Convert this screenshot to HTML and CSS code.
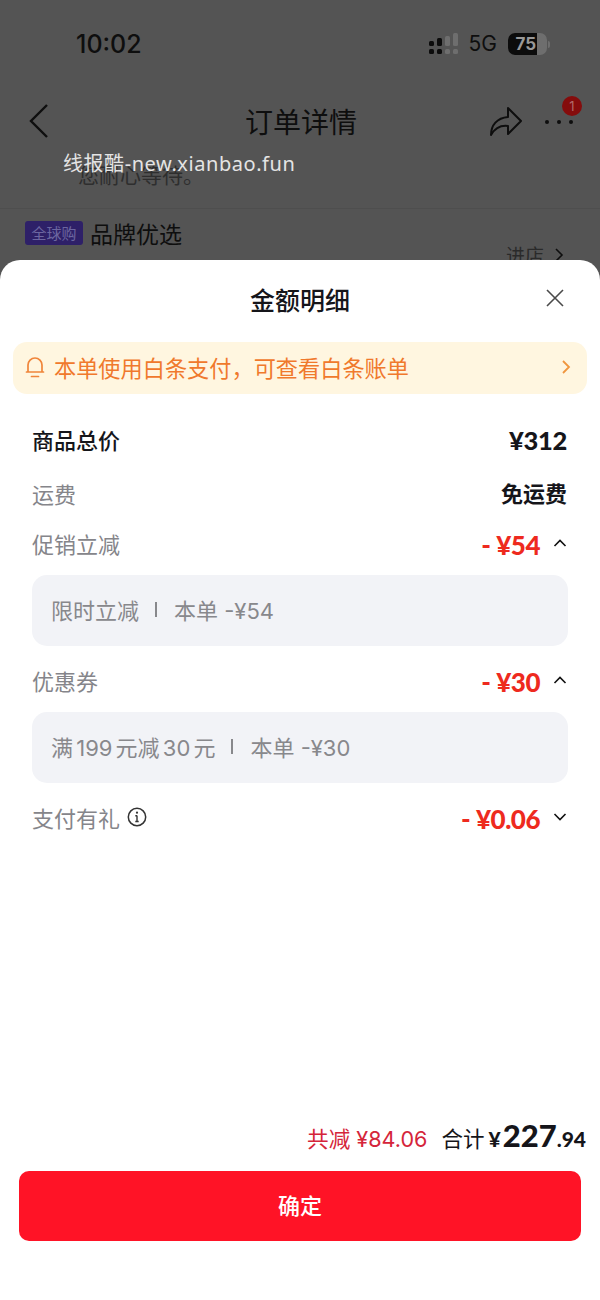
FILE: index.html
```html
<!DOCTYPE html>
<html lang="zh">
<head>
<meta charset="utf-8">
<title>金额明细</title>
<link rel="stylesheet" href="styles.css">
</head>
<body>
<div class="screen">
  <div class="back-page">
    <div class="status">
      <span class="time">10:02</span>
      <div class="status-right">
        <svg class="signal" width="30" height="22" viewBox="0 0 30 22">
          <g fill="#0c0c0c"><rect x="0" y="8" width="5" height="5" rx="1.500"/><rect x="0" y="16" width="5" height="5" rx="1.500"/><rect x="8" y="5" width="5" height="8" rx="1.500"/><rect x="8" y="16" width="5" height="5" rx="1.500"/></g>
          <g fill="#6e6e6e"><rect x="16" y="3" width="5" height="10" rx="1.500"/><rect x="16" y="16" width="5" height="5" rx="1.500"/><rect x="24" y="0" width="5" height="13" rx="1.500"/><rect x="24" y="16" width="5" height="5" rx="1.500"/></g>
        </svg>
        <span class="net">5G</span>
        <div class="battery"><span class="battery-fill">75</span></div>
        <span class="battery-tip"></span>
      </div>
    </div>
    <div class="nav">
      <svg class="back" width="22" height="36" viewBox="0 0 22 36"><path d="M19 2 3 18l16 16" fill="none" stroke="#0e0e0e" stroke-width="2.400"/></svg>
      <span class="nav-title">订单详情</span>
      <svg class="share" width="34" height="32" viewBox="0 0 34 32"><path d="M2 30C2 20 8 13 19 12V3l13 13-13 13v-8C11 20 6 23 2 30Z" fill="none" stroke="#0e0e0e" stroke-width="2" stroke-linejoin="round"/></svg>
      <span class="dots"><i></i><i></i><i></i></span>
      <span class="nav-badge">1</span>
    </div>
    <div class="wait">您耐心等待。</div>
    <div class="shop">
      <span class="shop-tag">全球购</span>
      <span class="shop-name">品牌优选</span>
      <span class="shop-link">进店 <svg width="10" height="16" viewBox="0 0 10 16"><path d="M2 2l6 6-6 6" fill="none" stroke="#0e0e0e" stroke-width="1.600"/></svg></span>
    </div>
  </div>

  <div class="watermark">线报酷-new.xianbao.fun</div>

  <section class="sheet">
    <header class="sheet-head">
      <h1 class="sheet-title">金额明细</h1>
      <svg class="close" width="20" height="20" viewBox="0 0 20 20"><path d="M2 2l16 16M18 2 2 18" fill="none" stroke="#4a4a4a" stroke-width="1.600"/></svg>
    </header>

    <div class="notice">
      <svg class="bell" width="20" height="22" viewBox="0 0 20 22"><path d="M3 16V9a7 7 0 0 1 14 0v7M1.500 16h17M6.500 20.500h7" fill="none" stroke="#f0853a" stroke-width="1.700" stroke-linecap="round"/></svg>
      <span class="notice-text">本单使用白条支付，可查看白条账单</span>
      <svg class="notice-arrow" width="10" height="16" viewBox="0 0 10 16"><path d="M2 2l6 6-6 6" fill="none" stroke="#f0963e" stroke-width="1.800"/></svg>
    </div>

    <div class="rows">
      <div class="row row-total">
        <span class="label-strong">商品总价</span>
        <span class="amount">¥312</span>
      </div>
      <div class="row row-ship">
        <span class="label">运费</span>
        <span class="free">免运费</span>
      </div>
      <div class="row row-promo">
        <span class="label">促销立减</span>
        <span class="value"><span class="discount">- ¥54</span>
          <svg class="chev" width="14" height="10" viewBox="0 0 14 10"><path d="M1.500 8 7 2.500 12.500 8" fill="none" stroke="#111" stroke-width="1.600"/></svg></span>
      </div>
      <div class="detail"><span>限时立减</span><i class="sep"></i><span>本单 -¥54</span></div>
      <div class="row row-coupon">
        <span class="label">优惠券</span>
        <span class="value"><span class="discount">- ¥30</span>
          <svg class="chev" width="14" height="10" viewBox="0 0 14 10"><path d="M1.500 8 7 2.500 12.500 8" fill="none" stroke="#111" stroke-width="1.600"/></svg></span>
      </div>
      <div class="detail"><span class="tight">满 199 元减 30 元</span><i class="sep"></i><span>本单 -¥30</span></div>
      <div class="row row-gift">
        <span class="label label-info">支付有礼
          <svg width="20" height="20" viewBox="0 0 20 20"><circle cx="10" cy="10" r="8.700" fill="none" stroke="#333" stroke-width="1.500"/><path d="M10 8.500v6M8.300 8.700H10M8.300 14.500h3.400" fill="none" stroke="#333" stroke-width="1.400"/><circle cx="10" cy="5.700" r="1.100" fill="#333"/></svg></span>
        <span class="value"><span class="discount">- ¥0.06</span>
          <svg class="chev" width="14" height="10" viewBox="0 0 14 10"><path d="M1.500 2 7 7.500 12.500 2" fill="none" stroke="#111" stroke-width="1.600"/></svg></span>
      </div>
    </div>

    <div class="summary">
      <span class="saved">共减 ¥84.06</span>
      <span class="sum-label">合计</span>
      <span class="sum-price"><span class="yen">¥</span><span class="int">227</span><span class="dec">.94</span></span>
    </div>
    <button class="confirm" type="button">确定</button>
  </section>
</div>
</body>
</html>
```
FILE: styles.css
```css
* { box-sizing: border-box; }
html, body { margin: 0; padding: 0; }
body { font-family: "Noto Sans CJK SC", "Noto Sans", sans-serif; background: #545454; }

.screen { position: relative; width: 600px; height: 1300px; overflow: hidden; background: #545454; }

.back-page { color: #0e0e0e; }
.status { display: flex; justify-content: space-between; align-items: center; height: 44px; margin-top: 22px; padding: 0 50px 0 76px; }
.time { font-family: Inter, sans-serif; font-size: 25px; font-weight: 500; line-height: 44px; }
.status-right { display: flex; align-items: center; }
.signal { margin-right: 10px; }
.net { font-family: Inter, sans-serif; font-size: 21px; line-height: 24px; margin-right: 11px; }
.battery { width: 39px; height: 22px; border-radius: 7px; background: #6e6e6e; overflow: hidden; }
.battery-fill { display: block; width: 29px; height: 22px; background: #0c0c0c; color: #999; font-family: Inter, sans-serif; font-size: 17px; font-weight: 700; line-height: 22px; text-align: right; padding-right: 1px; }
.battery-tip { width: 2px; height: 7px; margin-left: 1px; border-radius: 0 2px 2px 0; background: #6e6e6e; }

.nav { position: relative; display: flex; align-items: center; height: 40px; margin-top: 35px; padding: 0 27px 0 28px; }
.back { flex: none; }
.nav-title { position: absolute; left: 2px; right: 0; text-align: center; font-size: 28px; line-height: 40px; }
.share { flex: none; margin-left: auto; margin-right: 22px; }
.dots { display: flex; gap: 8px; align-items: center; margin-top: 1px; }
.dots i { width: 4px; height: 4px; border-radius: 50%; background: #0e0e0e; }
.nav-badge { position: absolute; right: 18px; top: -5px; width: 20px; height: 20px; border-radius: 50%; background: #850c0c; color: #b06a6a; font-family: Inter, sans-serif; font-size: 13px; line-height: 20px; text-align: center; }

.wait { padding-left: 78px; margin-top: 19px; height: 48px; font-size: 21px; line-height: 28px; color: #2e2e2e; }
.shop { position: relative; display: flex; align-items: center; height: 52px; padding: 0 0 4px 25px; border-top: 1px solid #4e4e4e; }
.shop-tag { width: 58px; height: 24px; margin-right: 7px; border-radius: 3px; background: #2e2068; color: #6c66a0; font-size: 15px; line-height: 24px; text-align: center; }
.shop-name { font-size: 23px; line-height: 32px; }
.shop-link { position: absolute; left: 506px; top: 32px; display: flex; align-items: center; gap: 10px; font-size: 19px; line-height: 28px; color: #2a2a2a; }

.watermark { position: absolute; left: 63px; top: 150px; font-family: "Noto Sans", "Noto Sans CJK SC", sans-serif; font-size: 20px; line-height: 28px; color: #e4e4e4; letter-spacing: 0.550px; }

.sheet { position: absolute; left: 0; top: 260px; width: 600px; height: 1040px; display: flex; flex-direction: column; background: #fff; border-radius: 20px 20px 0 0; }
.sheet-head { position: relative; height: 82px; display: flex; justify-content: center; padding-top: 22px; }
.sheet-title { margin: 0; font-size: 25px; font-weight: 500; line-height: 34px; color: #15151a; }
.close { position: absolute; left: 545px; top: 28px; }

.notice { display: flex; align-items: center; height: 52px; margin: 0 13px; padding: 0 16px 2px 12px; border-radius: 14px; background: #fff6e0; color: #f0792c; }
.bell { flex: none; margin-right: 9px; }
.notice-text { font-size: 22.200px; line-height: 30px; }
.notice-arrow { flex: none; margin-left: auto; }

.rows { padding: 0 33px 0 32px; }
.row { display: flex; justify-content: space-between; align-items: center; }
.row-total { height: 36px; margin-top: 30px; }
.row-ship { height: 36px; margin-top: 17px; }
.row-promo { height: 36px; margin-top: 14px; }
.row-coupon { height: 36px; margin-top: 18px; }
.row-gift { height: 36px; margin-top: 18px; }
.label-strong { padding-bottom: 6px; font-size: 22px; font-weight: 500; line-height: 30px; color: #15151a; }
.label { padding-bottom: 5px; font-size: 22px; line-height: 30px; color: #85858a; }
.label-info { display: flex; align-items: center; gap: 7px; }
.amount { padding-bottom: 4px; font-family: Lato, sans-serif; font-size: 25.500px; font-weight: 900; line-height: 30px; color: #15151a; letter-spacing: -0.300px; }
.free { padding-bottom: 7px; font-size: 22px; font-weight: 700; line-height: 30px; color: #15151a; }
.value { display: flex; align-items: center; gap: 13px; }
.discount { font-family: Lato, sans-serif; font-size: 26px; font-weight: 900; line-height: 30px; color: #ee2a1e; white-space: pre; letter-spacing: -0.500px; }
.chev { flex: none; margin-top: -5px; }
.detail { display: flex; align-items: center; height: 71px; margin-top: 12px; margin-right: -1px; padding: 0 0 3px 19px; border-radius: 15px; background: #f2f3f7; font-family: Inter, "Noto Sans CJK SC", sans-serif; font-size: 22px; color: #88888c; white-space: pre; }
.tight { word-spacing: -3px; }
.sep { width: 2px; height: 15px; margin: 0 17px 0 16px; background: #88888c; }

.summary { display: flex; justify-content: flex-end; align-items: baseline; margin-top: auto; padding-right: 14px; height: 38px; line-height: 38px; }
.saved { font-family: Inter, "Noto Sans CJK SC", sans-serif; font-size: 21.600px; color: #d5253a; margin-right: 14px; }
.sum-label { font-size: 21.500px; color: #15151a; margin-right: 4px; }
.sum-price { font-family: Lato, sans-serif; font-weight: 900; color: #15151a; }
.yen { font-size: 21px; margin-right: 2px; }
.int { font-size: 31px; }
.dec { font-size: 21px; }

.confirm { display: block; width: 562px; height: 70px; margin: 17px 19px 59px; padding: 0 0 4px; border: 0; border-radius: 10px; background: #ff1326; color: #fff; font-family: inherit; font-size: 22px; font-weight: 500; }
```
